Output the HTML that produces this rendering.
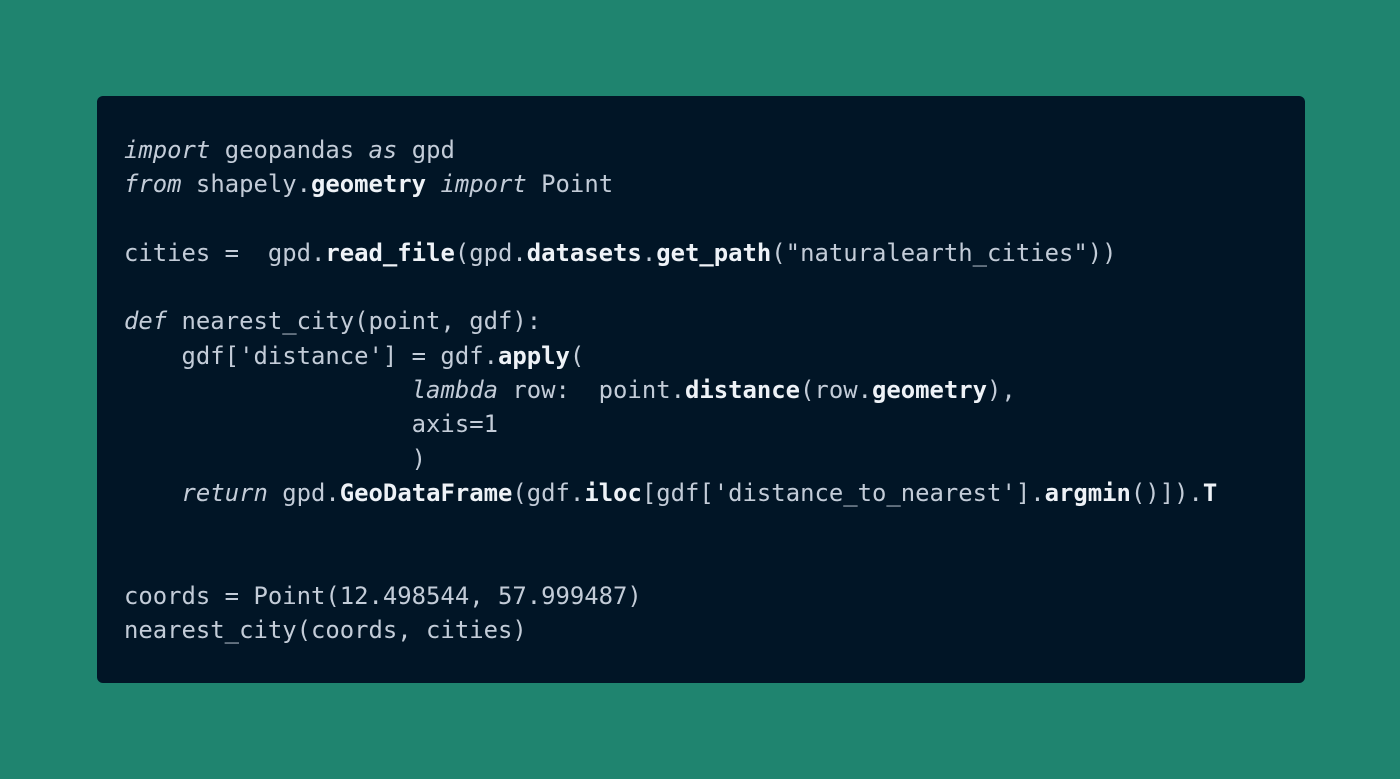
<!DOCTYPE html>
<html><head><meta charset="utf-8"><style>
html,body{margin:0;padding:0;width:1400px;height:779px;background:#1f846f;overflow:hidden}
.box{position:absolute;left:97px;top:96px;width:1208px;height:587px;background:#011526;border-radius:6px}
pre{position:absolute;left:27px;top:37px;margin:0;font-family:"DejaVu Sans Mono",monospace;font-size:23.9px;line-height:34.3px;color:#c3ccd8}
i{font-style:italic;color:#c3ccd8}
b{font-weight:bold;color:#eef2f7}
</style></head><body><div class="box"><pre><i>import</i> geopandas <i>as</i> gpd
<i>from</i> shapely.<b>geometry</b> <i>import</i> Point

cities =  gpd.<b>read_file</b>(gpd.<b>datasets</b>.<b>get_path</b>("naturalearth_cities"))

<i>def</i> nearest_city(point, gdf):
    gdf['distance'] = gdf.<b>apply</b>(
                    <i>lambda</i> row:  point.<b>distance</b>(row.<b>geometry</b>),
                    axis=1
                    )
    <i>return</i> gpd.<b>GeoDataFrame</b>(gdf.<b>iloc</b>[gdf['distance_to_nearest'].<b>argmin</b>()]).<b>T</b>


coords = Point(12.498544, 57.999487)
nearest_city(coords, cities)</pre></div></body></html>
